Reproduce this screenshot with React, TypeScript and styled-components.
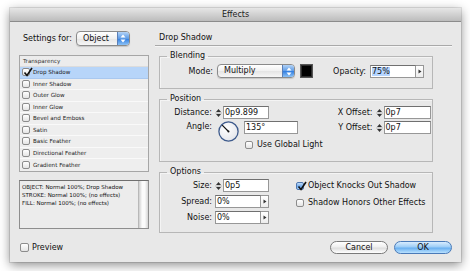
import styled, { createGlobalStyle } from "styled-components";

const GlobalStyle = createGlobalStyle`
  html, body {
    margin: 0;
    padding: 0;
    background: #fff;
  }
  body {
    font-family: "DejaVu Sans", "Liberation Sans", sans-serif;
    font-size: 8px;
    color: #111;
  }
  * {
    box-sizing: border-box;
  }
`;

const Page = styled.div`
  width: 470px;
  height: 271px;
  padding: 8px 9px 0 10px;
  overflow: hidden;
`;

const Window = styled.div`
  width: 451px;
  height: 254px;
  background: #e8e8e8;
  box-shadow: 0 3px 10px rgba(0, 0, 0, 0.45), 0 0 0 1px rgba(0, 0, 0, 0.1);
  display: flex;
  flex-direction: column;
`;

const TitleBar = styled.div`
  height: 14px;
  line-height: 13px;
  text-align: center;
  font-size: 8px;
  color: #222;
  background: linear-gradient(#e6e6e6, #bcbcbc);
  border-bottom: 1px solid #8c8c8c;
`;

const Body = styled.div`
  display: flex;
  gap: 6px;
  padding: 9px 9px 0 9px;
`;

const LeftColumn = styled.div`
  width: 130px;
  display: flex;
  flex-direction: column;
`;

const RightColumn = styled.div`
  flex: 1;
  display: flex;
  flex-direction: column;
`;

const SettingsRow = styled.div`
  display: flex;
  align-items: center;
  height: 15px;
  gap: 4px;
  padding-left: 4px;
`;

const Select = styled.div<{ width: number }>`
  width: ${(p) => p.width}px;
  height: ${(p) => (p.width > 60 ? 14 : 15)}px;
  display: flex;
  align-items: center;
  border: 1px solid #8a8a8a;
  border-radius: 4px;
  background: linear-gradient(#ffffff, #f0f0f0 50%, #e4e4e4 51%, #f6f6f6);
  overflow: hidden;
  box-shadow: 0 1px 1px rgba(0, 0, 0, 0.15);
`;

const SelectText = styled.span`
  flex: 1;
  padding-left: 6px;
  line-height: 12px;
`;

const Stepper = styled.div`
  width: 12px;
  height: 100%;
  border-left: 1px solid #5a7fb8;
  background: linear-gradient(#b3d3f7, #5d9be6 50%, #2f7ce0 51%, #8dc2f5);
  display: flex;
  align-items: center;
  justify-content: center;
`;

const EffectList = styled.div`
  margin-top: 9px;
  border: 1px solid #a6a6a6;
  background: #efefef;
  display: flex;
  flex-direction: column;
`;

const ListHeader = styled.div`
  height: 11px;
  line-height: 11px;
  padding-left: 3px;
  font-size: 5.6px;
  color: #333;
  background: #ececec;
  border-bottom: 1px solid #dcdcdc;
`;

const ListRow = styled.div<{ selected?: boolean }>`
  height: 11.5px;
  display: flex;
  align-items: center;
  gap: 3px;
  padding-left: 2px;
  font-size: 5.6px;
  color: #222;
  background: ${(p) => (p.selected ? "#b7d5f9" : "#eeeeee")};
  border-bottom: 1px solid ${(p) => (p.selected ? "#a9c8ef" : "#f9f9f9")};
  &:last-child {
    border-bottom: none;
  }
`;

const SummaryBox = styled.div`
  margin-top: 8px;
  height: 49px;
  display: flex;
  border: 1px solid #8e8e8e;
  border-top-color: #6f6f6f;
  background: #ececec;
`;

const SummaryText = styled.div`
  flex: 1;
  padding: 2px 2px;
  font-size: 5.5px;
  line-height: 8px;
  color: #111;
  white-space: nowrap;
`;

const ScrollTrack = styled.div`
  width: 10px;
  border-left: 1px solid #b8b8b8;
  background: linear-gradient(to right, #cfcfcf, #fbfbfb 35%, #fbfbfb 65%, #d4d4d4);
`;

const PreviewRow = styled.label`
  margin-top: 14px;
  display: flex;
  align-items: center;
  gap: 3px;
  padding-left: 1px;
  font-size: 8px;
`;

const PanelHeader = styled.div`
  height: 15px;
  line-height: 13px;
  padding-left: 4px;
  border-bottom: 1px solid #a9a9a9;
  box-shadow: 0 1px 0 #f6f6f6;
`;

const Groups = styled.div`
  padding-left: 4px;
  width: 278px;
  display: flex;
  flex-direction: column;
`;

const Group = styled.fieldset<{ pad: string }>`
  margin: 4px 0 0 0;
  padding: ${(p) => p.pad};
  min-inline-size: 0;
  border: 1px solid #b7b7b7;
  box-shadow: inset 1px 1px 0 #f4f4f4;
`;

const Legend = styled.legend`
  margin-left: 7px;
  padding: 0 3px;
  font-size: 8px;
  line-height: 12px;
`;

const Row = styled.div<{ gap?: number }>`
  display: flex;
  align-items: center;
  gap: ${(p) => p.gap ?? 0}px;
`;

const Stack = styled.div<{ gap: number; right?: boolean }>`
  display: flex;
  flex-direction: column;
  gap: ${(p) => p.gap}px;
  margin-left: ${(p) => (p.right ? "auto" : "0")};
  padding-right: ${(p) => (p.right ? 8 : 0)}px;
`;

const FieldLabel = styled.span<{ width: number; space?: number }>`
  width: ${(p) => p.width}px;
  margin-right: ${(p) => p.space ?? 3}px;
  text-align: right;
  white-space: nowrap;
`;

const Field = styled.div<{ width: number }>`
  width: ${(p) => p.width}px;
  height: 13px;
  line-height: 11px;
  padding-left: 1px;
  border: 1px solid #979797;
  border-top-color: #707070;
  background: #fff;
  white-space: nowrap;
`;

const Selected = styled.span`
  background: #b5d5ff;
`;

const ArrowButton = styled.div`
  width: 8px;
  height: 13px;
  border: 1px solid #979797;
  border-left: none;
  background: linear-gradient(#ffffff, #ececec);
  display: flex;
  align-items: center;
  justify-content: center;
`;

const SpinBox = styled.div`
  width: 7px;
  height: 12px;
  margin-right: 1px;
  display: flex;
  align-items: center;
`;

const Swatch = styled.div`
  width: 13px;
  height: 14px;
  margin-left: 5px;
  border: 1px solid #555;
  background: #000;
  box-shadow: inset 0 0 0 1px #2a2a2a;
`;

const Box = styled.span<{ aqua?: boolean; size: number }>`
  position: relative;
  width: ${(p) => p.size}px;
  height: ${(p) => p.size}px;
  flex: none;
  border: 1px solid ${(p) => (p.aqua ? "#4f77b0" : "#8c8c8c")};
  border-radius: 2px;
  background: ${(p) =>
    p.aqua
      ? "linear-gradient(#c4def9, #6da8ec 55%, #a6d0f7)"
      : "linear-gradient(#ffffff, #e4e4e4)"};
  svg {
    position: absolute;
    left: 0;
    top: -2px;
  }
`;

const CheckRow = styled.label<{ indent?: number }>`
  display: flex;
  align-items: center;
  gap: 4px;
  margin-left: ${(p) => p.indent ?? 0}px;
  white-space: nowrap;
`;

const Dial = styled.svg`
  margin-left: 3px;
  flex: none;
`;

const ButtonRow = styled.div`
  margin-top: 8px;
  display: flex;
  justify-content: flex-end;
  gap: 6px;
`;

const PushButton = styled.button<{ primary?: boolean }>`
  width: 58px;
  height: 13px;
  padding: 0;
  border-radius: 7px;
  font-family: inherit;
  font-size: 8px;
  line-height: 11px;
  color: #111;
  border: 1px solid ${(p) => (p.primary ? "#4a7ab8" : "#7a7a7a")};
  background: ${(p) =>
    p.primary
      ? "linear-gradient(#d9edfe, #9ccdf7 45%, #6ab0f0 55%, #b9e1ff)"
      : "linear-gradient(#ffffff, #efefef 45%, #dedede 55%, #ffffff)"};
`;

const Check = () => (
  <svg width="10" height="10" viewBox="0 0 10 10">
    <path d="M1.5 5.5 L4 8.5 L9 1" fill="none" stroke="#111" strokeWidth="1.6" />
  </svg>
);

const CheckBox = ({ checked, aqua, size = 9 }: { checked?: boolean; aqua?: boolean; size?: number }) => (
  <Box aqua={aqua} size={size}>
    {checked && <Check />}
  </Box>
);

const Spinner = () => (
  <SpinBox>
    <svg width="7" height="12" viewBox="0 0 7 12">
      <path d="M1 5 L3.5 2 L6 5 Z" fill="#333" />
      <line x1="0" y1="6" x2="7" y2="6" stroke="#999" strokeWidth="0.6" />
      <path d="M1 7 L3.5 10 L6 7 Z" fill="#333" />
    </svg>
  </SpinBox>
);

const SmallArrow = () => (
  <ArrowButton>
    <svg width="4" height="5" viewBox="0 0 4 5">
      <path d="M0.5 0.5 L3.5 2.5 L0.5 4.5 Z" fill="#333" />
    </svg>
  </ArrowButton>
);

const UpDown = () => (
  <svg width="6" height="9" viewBox="0 0 6 9">
    <path d="M0.5 3.5 L3 0.5 L5.5 3.5 Z" fill="#fff" />
    <path d="M0.5 5.5 L3 8.5 L5.5 5.5 Z" fill="#fff" />
  </svg>
);

const effects = [
  "Drop Shadow",
  "Inner Shadow",
  "Outer Glow",
  "Inner Glow",
  "Bevel and Emboss",
  "Satin",
  "Basic Feather",
  "Directional Feather",
  "Gradient Feather",
];

export default function App() {
  return (
    <>
      <GlobalStyle />
      <Page>
        <Window>
          <TitleBar>Effects</TitleBar>
          <Body>
            <LeftColumn>
              <SettingsRow>
                <span>Settings for:</span>
                <Select width={54}>
                  <SelectText>Object</SelectText>
                  <Stepper>
                    <UpDown />
                  </Stepper>
                </Select>
              </SettingsRow>
              <EffectList>
                <ListHeader>Transparency</ListHeader>
                {effects.map((name, i) => (
                  <ListRow key={name} selected={i === 0}>
                    <CheckBox checked={i === 0} size={8} />
                    {name}
                  </ListRow>
                ))}
              </EffectList>
              <SummaryBox>
                <SummaryText>
                  OBJECT: Normal 100%; Drop Shadow
                  <br />
                  STROKE: Normal 100%; (no effects)
                  <br />
                  FILL: Normal 100%; (no effects)
                </SummaryText>
                <ScrollTrack />
              </SummaryBox>
              <PreviewRow>
                <CheckBox />
                Preview
              </PreviewRow>
            </LeftColumn>

            <RightColumn>
              <PanelHeader>Drop Shadow</PanelHeader>
              <Groups>
                <Group pad="2px 0 10px 0">
                  <Legend>Blending</Legend>
                  <Row>
                    <FieldLabel width={53} space={4}>
                      Mode:
                    </FieldLabel>
                    <Select width={78}>
                      <SelectText>Multiply</SelectText>
                      <Stepper>
                        <UpDown />
                      </Stepper>
                    </Select>
                    <Swatch />
                    <Stack gap={0} right>
                      <Row>
                        <FieldLabel width={40} space={4}>
                          Opacity:
                        </FieldLabel>
                        <Field width={46}>
                          <Selected>75%</Selected>
                        </Field>
                        <SmallArrow />
                      </Row>
                    </Stack>
                  </Row>
                </Group>

                <Group pad="1px 0 12px 0">
                  <Legend>Position</Legend>
                  <Row style={{ alignItems: "flex-start" }}>
                    <Stack gap={2}>
                      <Row>
                        <FieldLabel width={52}>Distance:</FieldLabel>
                        <Spinner />
                        <Field width={46}>0p9.899</Field>
                      </Row>
                      <Row style={{ alignItems: "flex-start" }}>
                        <FieldLabel width={52} style={{ marginTop: 1 }}>
                          Angle:
                        </FieldLabel>
                        <Dial width="21" height="21" viewBox="0 0 21 21">
                          <defs>
                            <radialGradient id="dialFill" cx="40%" cy="35%" r="70%">
                              <stop offset="0%" stopColor="#ffffff" />
                              <stop offset="100%" stopColor="#e2e4ea" />
                            </radialGradient>
                          </defs>
                          <circle cx="10.5" cy="10.5" r="9.6" fill="url(#dialFill)" stroke="#3d5a8c" strokeWidth="1.3" />
                          <line x1="10.5" y1="10.5" x2="4.2" y2="4.2" stroke="#111" strokeWidth="1.2" />
                          <circle cx="10.5" cy="10.5" r="1" fill="#111" />
                        </Dial>
                        <Stack gap={6} style={{ marginLeft: 5 }}>
                          <Field width={54}>135°</Field>
                          <CheckRow indent={1}>
                            <CheckBox size={8} />
                            Use Global Light
                          </CheckRow>
                        </Stack>
                      </Row>
                    </Stack>
                    <Stack gap={2} right>
                      <Row>
                        <FieldLabel width={50}>X Offset:</FieldLabel>
                        <Spinner />
                        <Field width={47}>0p7</Field>
                      </Row>
                      <Row>
                        <FieldLabel width={50}>Y Offset:</FieldLabel>
                        <Spinner />
                        <Field width={47}>0p7</Field>
                      </Row>
                    </Stack>
                  </Row>
                </Group>

                <Group pad="1px 0 8px 0">
                  <Legend>Options</Legend>
                  <Row style={{ alignItems: "flex-start" }}>
                    <Stack gap={3}>
                      <Row>
                        <FieldLabel width={52}>Size:</FieldLabel>
                        <Spinner />
                        <Field width={46}>0p5</Field>
                      </Row>
                      <Row>
                        <FieldLabel width={52}>Spread:</FieldLabel>
                        <Field width={46}>0%</Field>
                        <SmallArrow />
                      </Row>
                      <Row>
                        <FieldLabel width={52}>Noise:</FieldLabel>
                        <Field width={46}>0%</Field>
                        <SmallArrow />
                      </Row>
                    </Stack>
                    <Stack gap={8} style={{ marginLeft: 27, paddingTop: 2 }}>
                      <CheckRow>
                        <CheckBox checked aqua size={8} />
                        Object Knocks Out Shadow
                      </CheckRow>
                      <CheckRow>
                        <CheckBox size={8} />
                        Shadow Honors Other Effects
                      </CheckRow>
                    </Stack>
                  </Row>
                </Group>
              </Groups>
              <ButtonRow>
                <PushButton>Cancel</PushButton>
                <PushButton primary>OK</PushButton>
              </ButtonRow>
            </RightColumn>
          </Body>
        </Window>
      </Page>
    </>
  );
}
